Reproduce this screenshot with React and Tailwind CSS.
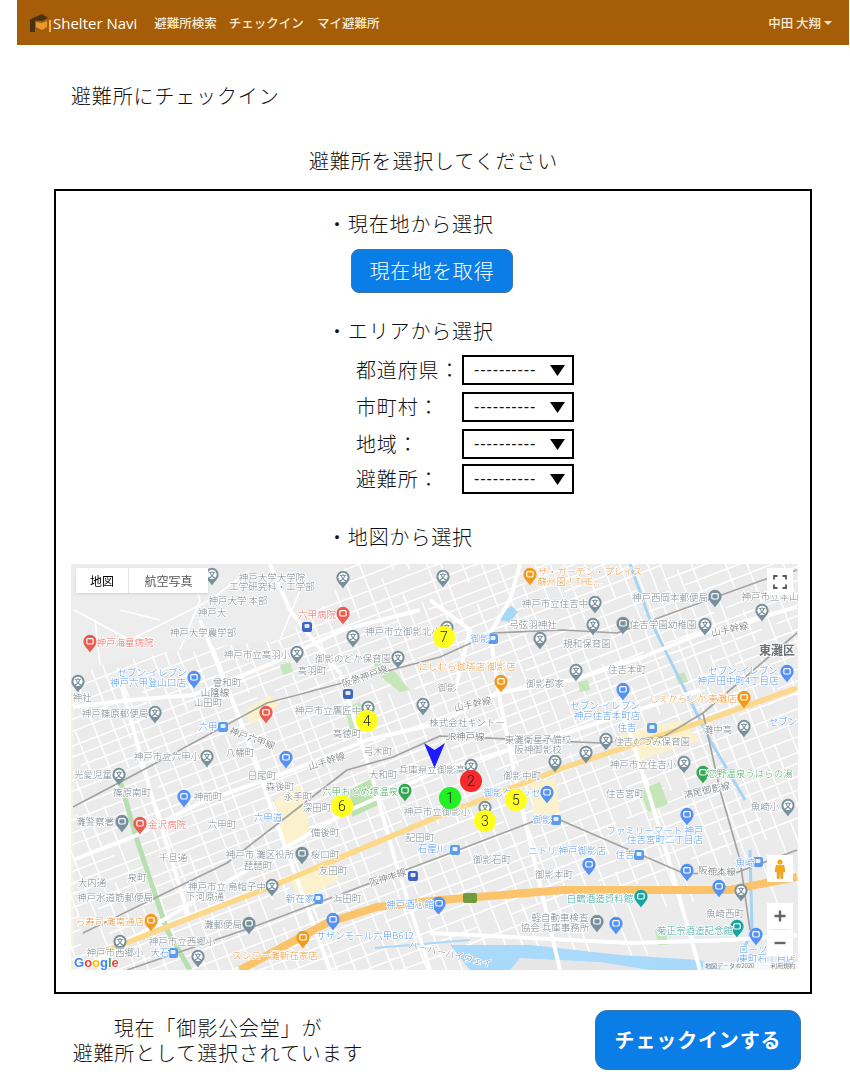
import React from "react";

const GRAY = "#7d8890", DARK = "#666c70", BLUE = "#5a9bec", RED = "#ea6a62", ORANGE = "#ec9a40", GREEN = "#4fae6c", TEAL = "#3ca6a0";

const labels = [
  ["神戸大学大学院",272,578,GRAY],["工学研究科・工学部",272,587,GRAY],["神戸大学 本部",238,601,GRAY],["神戸大",212,613,GRAY],["神戸大学農学部",203,633,GRAY],
  ["六甲病院",317,615,RED],["神戸市立御影北小",403,632,GRAY],["神戸海星病院",125,643,RED],["神戸市立高羽小",257,655,GRAY],["御影のどか保育園",353,659,GRAY],
  ["高羽町",312,671,GRAY],["阪急神戸線",365,677,DARK,-19],["セブン-イレブン",152,673,BLUE],["神戸六甲登山口店",148,683,BLUE],["曾和町",227,683,GRAY],["山陰線",215,693,DARK],["山田町",208,703,GRAY],
  ["神社",82,698,GRAY],["神戸篠原郵便局",115,714,GRAY],["神戸市立鷹匠中",328,711,GRAY],["株式会社キントー",467,723,GRAY],["高徳町",347,734,GRAY],["六甲",208,727,BLUE],["神戸六甲線",252,739,DARK,20],["八幡町",240,753,GRAY],["山手幹線",327,762,DARK,-18],["弓木町",378,752,GRAY],["神戸市立六甲小",167,757,GRAY],
  ["ザ・ガーデン・プレイス",590,572,ORANGE],["蘇州園！THE…",570,582,ORANGE],["神戸市立住吉中",555,604,GRAY],["弓弦羽神社",533,625,GRAY],["神戸西岡本郵便局",670,598,GRAY],["神戸市立本山",770,597,GRAY],["住吉学園幼稚園",663,625,GRAY],["山手幹線",730,630,DARK,-12],["規和保育園",587,644,GRAY],["御影",480,639,BLUE],["にしむら珈琲店 御影店",467,667,ORANGE],["住吉本町",627,670,GRAY],["御影郡家",545,684,GRAY],["御影",447,688,GRAY],["山手幹線",473,705,DARK,-12],
  ["セブン-イレブン",743,671,BLUE],["神戸田中町4丁目店",738,681,BLUE],["しぇからしか 東灘店",693,699,ORANGE],["セブン-イレブン",605,706,BLUE],["神戸住吉本町店",607,716,BLUE],["住吉",627,728,BLUE],["灘中高",718,730,GRAY],["セブン",783,722,BLUE],["JR神戸線",465,737,DARK],["東灘衛星予備校",538,740,GRAY],["阪神御影校",538,750,GRAY],["住吉むつみ保育園",652,742,GRAY],["神戸市立住吉小",643,765,GRAY],
  ["光愛児童",93,775,GRAY],["篠原南町",132,793,GRAY],["神前町",208,797,GRAY],["森後町",280,787,GRAY],["日尾町",262,776,GRAY],["永手町",298,797,GRAY],["深田町",317,808,GRAY],["大和町",383,775,GRAY],["六甲おとめ塚温泉",360,792,GREEN],["兵庫県立御影高",432,770,GRAY],["灘警察署",95,822,GRAY],["金沢病院",167,825,RED],["六甲町",222,825,GRAY],["六甲道",268,818,BLUE],["備後町",325,833,GRAY],["神戸市 灘区役所",260,855,GRAY],["桜口町",325,855,GRAY],["記田町",420,838,GRAY],["石屋川",432,849,BLUE],["千旦通",173,858,GRAY],["琵琶町",258,866,GRAY],["友田町",333,871,GRAY],["阪神本線",388,878,DARK,-18],["大内通",92,883,GRAY],["泉町",137,878,GRAY],["神戸市立 烏帽子中",227,887,GRAY],["神戸水道筋郵便局",115,898,GRAY],["下河原通",205,897,GRAY],["新在家",300,899,BLUE],["浜田町",347,899,GRAY],["神戸酒心館",410,905,BLUE],["ら寿司 灘南通店",110,922,ORANGE],["灘郵便局",223,925,GRAY],["神戸市立西郷小",182,942,GRAY],["サザンモール六甲B612",365,936,BLUE],["大石",160,953,BLUE],["スシロー灘新在家店",275,956,ORANGE],["神戸市西郷小",115,953,GRAY],["ハーバーハイウェイ",450,955,GRAY,13],
  ["御影中町",522,776,GRAY],["恋野温泉うはらの湯",750,774,GREEN],["御影クロッセ",512,793,BLUE],["住吉宮町",625,794,GRAY],["鴻尾御影線",707,791,DARK,-12],["魚崎小",765,807,GRAY],["神戸市立御影小",437,812,GRAY],["御影",542,820,BLUE],["ファミリーマート 神戸",655,831,BLUE],["住吉宮町二丁目店",665,840,BLUE],["ニトリ 神戸御影店",567,851,BLUE],["住吉",625,855,BLUE],["御影石町",492,860,GRAY],["魚崎",745,863,BLUE],["御影本町",554,875,GRAY],["阪神本線",717,872,DARK,3],["白鶴酒造資料館",600,899,TEAL],["魚崎西町",725,914,GRAY],["軽自動車検査",560,918,GRAY],["協会 兵庫事務所",555,928,GRAY],["菊正宗酒造記念館",695,931,TEAL],["ローソン",758,950,BLUE],["東町石丁目店",767,959,BLUE],
];

const schools = [[212,575],[343,578],[353,637],[297,653],[398,658],[78,682],[423,705],[368,708],[155,713],[207,757],[443,577],[595,603],[593,625],[540,639],[576,671],[606,740],[586,753],[555,762],[744,727],[684,763],[447,628],[705,625],[762,611],[119,775],[272,886],[120,942],[198,957],[788,806],[741,891],[485,808],[471,766]];
const softs = [[623,624],[715,597],[122,822],[302,854],[249,924],[597,922]];
const blues = [[194,678],[286,758],[623,690],[787,672],[184,797],[333,920],[438,904],[547,793],[687,815],[589,865],[687,871],[719,887],[439,904],[616,924],[756,935]];
const reds = [[90,642],[343,614],[266,713],[140,824]];
const oranges = [[530,575],[501,682],[744,698],[151,921],[303,938]];
const greens = [[405,791],[703,773]];
const teals = [[641,897],[737,927]];
const stations = [[307,627,"#3e66c4"],[348,694,"#3e66c4"],[223,727,BLUE],[493,639,BLUE],[652,728,BLUE],[318,899,BLUE],[173,953,BLUE],[413,876,"#3e66c4"],[556,820,BLUE],[455,850,BLUE],[639,855,BLUE],[758,862,BLUE]];
const markers = [[444,637,"7","#ffff1f"],[367,721,"4","#ffff1f"],[342,806,"6","#ffff1f"],[471,781,"2","#f52a2a"],[450,798,"1","#22f022"],[485,821,"3","#ffff1f"],[516,800,"5","#ffff1f"]];

const whiteRoads = [
  "M73 860L133 837L200 803L293 770L367 740L440 723L497 693L573 680L643 657L697 635L797 607",
  "M73 707L130 700L193 695L273 663L343 630L420 610",
  "M313 640L340 673L370 770L395 860L430 970",
  "M430 933L630 943L730 940L797 935",
  "M270 564L290 610L313 640",
  "M520 564L510 600L490 633L500 700L520 800L560 970",
  "M80 970L230 880L350 810L440 770L560 735L700 690",
  "M200 620L240 720L290 860L330 970",
  "M620 700L660 830L700 970",
  "M120 680L150 790L190 920",
  "M430 600L470 630L455 690",
];

function buildStreets() {
  let s = 12345;
  const rnd = () => ((s = (s * 1103515245 + 12345) & 0x7fffffff) / 0x7fffffff);
  const out = [];
  for (let y = -300; y < 950; y += 10 + rnd() * 5) {
    let x = -200;
    while (x < 1100) {
      const l = 30 + rnd() * 110;
      out.push(`M${x.toFixed(0)} ${y.toFixed(0)}H${(x + l).toFixed(0)}`);
      x += l + (rnd() < 0.35 ? 12 + rnd() * 25 : 0);
    }
  }
  for (let x = -200; x < 1150; x += 12 + rnd() * 8) {
    let y = -300;
    while (y < 950) {
      const l = 25 + rnd() * 90;
      out.push(`M${x.toFixed(0)} ${y.toFixed(0)}V${(y + l).toFixed(0)}`);
      y += l + (rnd() < 0.4 ? 12 + rnd() * 25 : 0);
    }
  }
  return out.join("");
}
const streets = buildStreets();

function Pin({ x, y, color, glyph }) {
  return (
    <g transform={`translate(${x} ${y})`}>
      <path d="M0 10.5C-1.8 6.8-6.6 4-6.6 -0.6A6.6 6.6 0 1 1 6.6 -0.6C6.6 4 1.8 6.8 0 10.5Z" fill={color} />
      {glyph ? (
        <>
          <circle cx="0" cy="-0.6" r="4.6" fill="#fff" />
          <text x="0" y="2" fontSize="7" textAnchor="middle" fill={color} fontWeight="700">{glyph}</text>
        </>
      ) : (
        <rect x="-3.2" y="-3.4" width="6.4" height="5.4" rx="1.2" fill="none" stroke="#fff" strokeWidth="1.2" />
      )}
    </g>
  );
}

function GoogleMapArt() {
  return (
    <svg viewBox="71 564 727 406" width="727" height="406" className="block" style={{ fontFamily: "'Noto Sans CJK JP',sans-serif" }}>
      <rect x="71" y="564" width="727" height="406" fill="#ebebeb" />
      <rect x="71" y="564" width="3" height="406" fill="#f6f0de" />
      <g filter="url(#soft)">
        <g transform="rotate(-21 434 767)">
          <path d={streets} stroke="#fff" strokeWidth="1.5" fill="none" />
        </g>
        <path d="M71 564H345L330 600L280 640L180 650L100 665L71 680Z" fill="#ededed" />
        <path d="M74 610L130 640L210 600L250 570M180 650L200 600L190 570M100 665L95 620M300 590L280 640M120 610L160 620" stroke="#fff" strokeWidth="1.6" fill="none" />

        {/* parks, blocks, water */}
        <path d="M350 790L372 778L378 805L352 817Z" fill="#b9e2ad" />
        <path d="M345 708L360 702L366 725L350 730Z" fill="#c5e6b9" />
        <path d="M280 665L290 662L293 672L283 675Z" fill="#c5e6b9" />
        <path d="M372 660L395 672L410 690L400 692L380 676Z" fill="#c5e6b9" />
        <path d="M640 790L660 782L668 804L648 812Z" fill="#c5e6b9" />
        <path d="M675 675L684 672L688 682L679 684Z" fill="#c5e6b9" />
        <path d="M578 682L588 680L590 690L580 692Z" fill="#c5e6b9" />
        <path d="M655 930L665 926L668 945L658 945Z" fill="#c5e6b9" />
        <path d="M275 800L300 785L310 830L285 850Z" fill="#fbf1cd" />
        <path d="M245 710L270 695L280 705L250 725Z" fill="#fbf1cd" />
        <path d="M530 785L555 778L560 812L535 815Z" fill="#fbf1cd" />
        <path d="M620 735L680 720L700 740L640 760Z" fill="#fbf1cd" />
        <path d="M290 880L330 860L338 880L300 900Z" fill="#fbf1cd" />
        <path d="M500 612L512 606L518 612L510 622L498 620Z" fill="#a8d8f5" />
        <path d="M117 770L137 840L167 930L190 970" stroke="#b7dfb0" strokeWidth="5" fill="none" />
        <path d="M630 564L650 620L710 740L745 800" stroke="#a6d4f2" strokeWidth="3" fill="none" />
        <path d="M750 850L752 930L735 970" stroke="#a6d4f2" strokeWidth="3" fill="none" />
        <path d="M450 945L530 945L620 955L700 960L730 970H470Z" fill="#a9d9fb" />
        <path d="M520 958L600 962L650 970H510Z" fill="#e6e6e6" />
        <path d="M375 948L470 940" stroke="#a9d9fb" strokeWidth="2" fill="none" />

        {/* main white roads */}
        <path d={whiteRoads.join("")} stroke="#fff" strokeWidth="4" fill="none" strokeLinejoin="round" />

        {/* highways */}
        <path d="M100 953L270 887L437 817L563 768L707 720L797 688" stroke="#fcd98a" strokeWidth="5.5" fill="none" strokeLinejoin="round" />
        <path d="M240 970L327 923L377 907L440 900L563 890L730 890L797 877" stroke="#fbc46a" strokeWidth="8" fill="none" strokeLinejoin="round" />

        {/* railways */}
        <g stroke="#a3a3a3" strokeWidth="1.7" fill="none" strokeLinejoin="round">
          <path d="M73 807L143 770L267 703L440 657L493 633L563 630L617 633L763 580L797 570" />
          <path d="M83 933L227 863L347 770L393 757L440 736L600 743L663 737L703 713L797 633" />
          <path d="M127 970L253 927L440 857L537 820L560 820L683 873L730 875L797 850" />
          <path d="M703 713L720 790L740 860L750 930" />
        </g>
      </g>

      <g filter="url(#softer)">
        {stations.map(([x, y, c], i) => (
          <g key={i}>
            <rect x={x - 5} y={y - 5} width="10" height="10" rx="2.2" fill={c} />
            <rect x={x - 2.5} y={y - 3} width="5" height="4" rx="1" fill="#fff" fillOpacity="0.85" />
          </g>
        ))}
        {schools.map(([x, y], i) => <Pin key={i} x={x} y={y} color="#78909c" glyph="文" />)}
        {softs.map(([x, y], i) => <Pin key={i} x={x} y={y} color="#78909c" />)}
        {blues.map(([x, y], i) => <Pin key={i} x={x} y={y} color="#5491f5" />)}
        {reds.map(([x, y], i) => <Pin key={i} x={x} y={y} color="#ea5b4f" />)}
        {oranges.map(([x, y], i) => <Pin key={i} x={x} y={y} color="#f29a1f" />)}
        {greens.map(([x, y], i) => <Pin key={i} x={x} y={y} color="#33a852" />)}
        {teals.map(([x, y], i) => <Pin key={i} x={x} y={y} color="#12a5a0" />)}
        <g fontSize="9.5" textAnchor="middle" dominantBaseline="middle" stroke="#fff" strokeWidth="1.8" paintOrder="stroke" strokeLinejoin="round">
          {labels.map(([t, x, y, c, r], i) => (
            <text key={i} x={x} y={y} fill={c} transform={r ? `rotate(${r} ${x} ${y})` : undefined}>{t}</text>
          ))}
          <text x="777" y="652" fill="#6a6f73" fontSize="12" fontWeight="700">東灘区</text>
        </g>
        <rect x="463" y="893" width="14" height="10" rx="2" fill="#6f9a3a" />
        <g fontSize="13" fontWeight="700" fontFamily="'Liberation Sans',sans-serif" stroke="#fff" strokeWidth="1.5" paintOrder="stroke">
          <text x="74" y="967"><tspan fill="#4285f4">G</tspan><tspan fill="#ea4335">o</tspan><tspan fill="#fbbc05">o</tspan><tspan fill="#4285f4">g</tspan><tspan fill="#34a853">l</tspan><tspan fill="#ea4335">e</tspan></text>
        </g>
      </g>
      <rect x="703" y="962" width="95" height="8" fill="#fff" fillOpacity="0.65" />
      <text x="705" y="968" fontSize="6" fill="#444">地図データ ©2020</text>
      <text x="771" y="968" fontSize="6" fill="#444">利用規約</text>

      {/* markers */}
      {markers.map(([x, y, n, c]) => (
        <g key={n}>
          <circle cx={x} cy={y} r="11" fill={c} />
          <text x={x} y={y + 5} fontSize="14" textAnchor="middle" fill="#222" fontFamily="Roboto,sans-serif">{n}</text>
        </g>
      ))}
      <path d="M424 743L434.5 750L445 743L434.5 768Z" fill="#1c1cff" />
    </svg>
  );
}

function Field({ label, className }) {
  return (
    <div className={`flex items-center ${className}`}>
      <span className="w-[106px] shrink-0">{label}</span>
      <div className="relative w-[112px] h-[30px]">
        <select className="block w-full h-full appearance-none border-2 border-black bg-white pl-[10px] rounded-none text-[16px] leading-[20px] tracking-[0.9px] font-['Liberation_Sans',sans-serif]">
          <option>----------</option>
        </select>
        <svg viewBox="0 0 15 11" className="absolute right-[9px] top-[10px] w-[15px] h-[11px] pointer-events-none">
          <path d="M0 0H15L7.5 11Z" fill="#000" />
        </svg>
      </div>
    </div>
  );
}

export default function App() {
  return (
    <div className="w-[850px] pb-[9px] bg-white text-[#111] text-[20px] leading-[30px] tracking-[0.85px] font-light font-['Noto_Sans_CJK_JP',sans-serif]">
      <nav className="ml-[17px] mr-[1px] h-[45px] bg-[#a55d07] flex items-center text-[#f7ead6] tracking-normal">
        <svg viewBox="0 0 22 20" className="ml-[12px] w-[22px] h-[20px] blur-[0.5px]">
          <path d="M0 7L13 1L19 5L13 8L6 7.5V19H1V8Z" fill="#4a3212" />
          <path d="M7 9L13 10L18 8V14L13 17L7 14Z" fill="#e89a2e" />
          <path d="M20 7H22V19H20Z" fill="#f0b050" />
        </svg>
        <span className="ml-[2px] text-[15px] font-normal text-white font-['Open_Sans',sans-serif]">Shelter Navi</span>
        <span className="ml-[17px] text-[12.5px] font-medium">避難所検索</span>
        <span className="ml-[12px] text-[12.5px] font-medium">チェックイン</span>
        <span className="ml-[13px] text-[12.5px] font-medium">マイ避難所</span>
        <span className="ml-auto text-[12.5px] font-medium">中田 大翔</span>
        <span className="ml-[3px] mr-[17px] w-0 h-0 border-x-[4px] border-x-transparent border-t-[4px] border-t-[#f7ead6]" />
      </nav>

      <h1 className="ml-[71px] mt-[36px]">避難所にチェックイン</h1>
      <h2 className="mt-[35px] text-center pl-[17px]">避難所を選択してください</h2>

      <section className="ml-[54px] mt-[13px] w-[758px] border-2 border-black pt-[18px] pb-[22px]">
        <p className="ml-[271px]">・現在地から選択</p>
        <button className="block ml-[295px] mt-[10px] w-[162px] h-[44px] rounded-[8px] bg-[#0a7de6] border border-[#3f74a4] text-white">現在地を取得</button>
        <p className="ml-[271px] mt-[23px]">・エリアから選択</p>
        <div className="ml-[300px] mt-[9px]">
          <Field label="都道府県：" />
          <Field label="市町村：" className="mt-[7px]" />
          <Field label="地域：" className="mt-[7px]" />
          <Field label="避難所：" className="mt-[5px]" />
        </div>
        <p className="ml-[271px] mt-[28px]">・地図から選択</p>

        <div className="relative ml-[15px] mt-[12px] w-[727px] h-[406px] overflow-hidden tracking-normal">
          <GoogleMapArt />
          <div className="absolute left-[5px] top-[4px] h-[25px] w-[132px] flex bg-white text-[12px] leading-[25px] font-normal shadow-sm">
            <span className="w-[53px] text-center border-r border-[#e6e6e6] text-black">地図</span>
            <span className="flex-1 text-center text-[#555]">航空写真</span>
          </div>
          <div className="absolute left-[696px] top-[4px] w-[26px] h-[27px] bg-white flex items-center justify-center">
            <svg viewBox="0 0 14 14" className="w-[14px] h-[14px]">
              <path d="M1 4.5V1H4.5M9.5 1H13V4.5M13 9.5V13H9.5M4.5 13H1V9.5" stroke="#555" strokeWidth="1.8" fill="none" />
            </svg>
          </div>
          <div className="absolute left-[696px] top-[291px] w-[26px] h-[27px] bg-white flex items-center justify-center">
            <svg viewBox="0 0 12 20" className="w-[12px] h-[20px]">
              <circle cx="6" cy="3" r="2.6" fill="#f4a81c" />
              <path d="M2 6.5H10L11 13H9V19.5H6.6V14H5.4V19.5H3V13H1Z" fill="#f4a81c" stroke="#c47f0a" strokeWidth="0.4" />
            </svg>
          </div>
          <div className="absolute left-[696px] top-[339px] w-[26px] h-[53px] bg-white flex flex-col items-center">
            <svg viewBox="0 0 26 26" className="w-[26px] h-[26px]">
              <path d="M13 7.5V18.5M7.5 13H18.5" stroke="#666" strokeWidth="2.4" />
            </svg>
            <div className="w-[20px] h-px bg-[#e6e6e6]" />
            <svg viewBox="0 0 26 26" className="w-[26px] h-[26px]">
              <path d="M7.5 13H18.5" stroke="#666" strokeWidth="2.4" />
            </svg>
          </div>
        </div>
      </section>

      <div className="mt-[16px] flex items-center">
        <p className="ml-[71px] w-[294px] text-center leading-[25px]">
          現在「御影公会堂」が<br />避難所として選択されています
        </p>
        <button className="ml-[230px] w-[206px] h-[60px] rounded-[12px] bg-[#0a7de6] border border-[#3f74a4] text-white font-bold">チェックインする</button>
      </div>

      <svg width="0" height="0" className="absolute">
        <filter id="soft"><feGaussianBlur stdDeviation="0.4" /></filter>
        <filter id="softer"><feGaussianBlur stdDeviation="0.3" /></filter>
      </svg>
    </div>
  );
}
